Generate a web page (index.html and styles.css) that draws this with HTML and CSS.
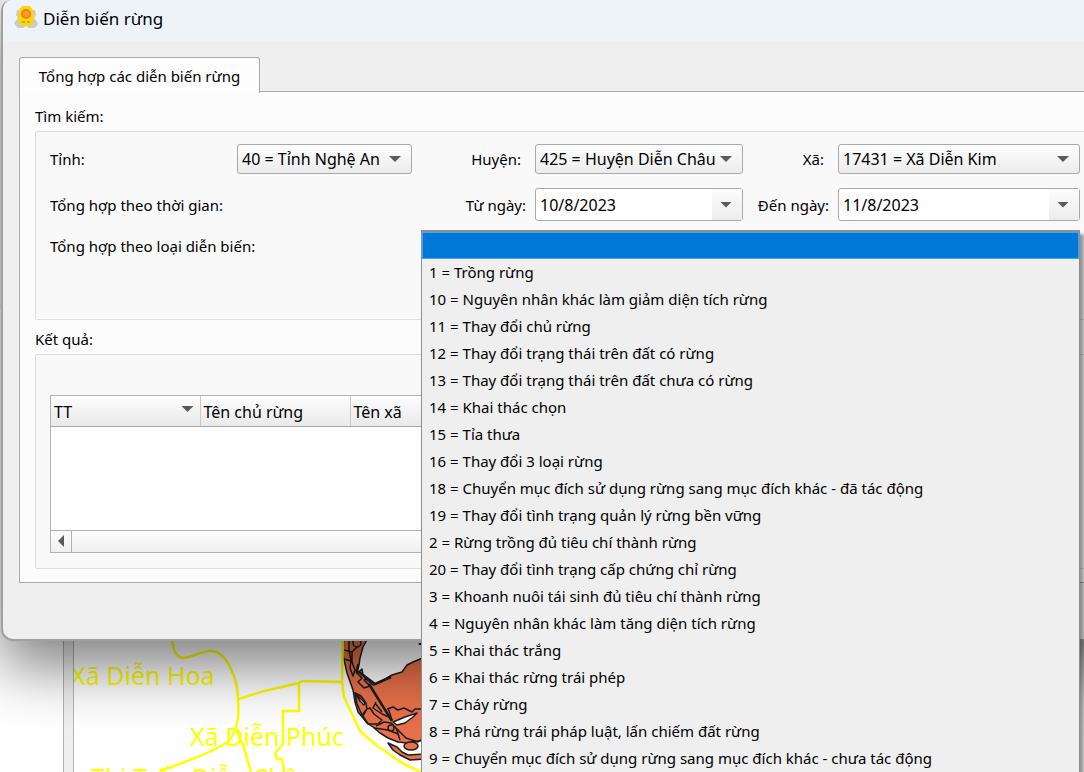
FILE: index.html
```html
<!DOCTYPE html>
<html lang="vi">
<head>
<meta charset="utf-8">
<title>Diễn biến rừng</title>
<link rel="stylesheet" href="styles.css">
</head>
<body>
<main class="desktop">
  <div class="side"></div>
  <div class="splitter"></div>
  <div class="map">
    <svg class="map-art" width="360" height="134" viewBox="73 638 360 134" aria-hidden="true">
      <g fill="#e8704a" stroke="#1c1c1c" stroke-width="1.5" stroke-linejoin="round">
        <path d="M344 632L343 655L347 673L353 690L355 702L358 712L363 718L367 723L373 727L380 733L388 738L398 742L407 743L425 740V657L413 662L407 665L402 672L392 675L380 682L373 685L367 680L363 675L362 669L357 673L359 665L360 658L363 647L368 638V632Z"/>
        <path d="M388 743L397 747L402 752L408 755L425 754V759L410 760L400 755L393 750Z"/>
        <ellipse cx="411" cy="746" rx="7" ry="4"/>
        <g fill="none">
          <path d="M349 636V651L351 660L350 668L353 676L355 670L352 662V652M353 643A4 4 0 1 0 361 643A4 4 0 1 0 353 643M344 650L352 652L358 646M353 636V642M344 659L351 661"/>
          <path d="M358 664L356 672L362 678L358 682L364 688L370 686L364 680L368 678"/>
          <path d="M355 693L357 704L362 715L367 709L366 703L361 696ZM367 709L363 716L368 724L378 724L382 720L374 714L370 708Z"/>
          <path d="M376 702L373 708L382 714L391 718M375 703L382 712M374 728L388 730L398 734L400 740M376 726L384 722L391 723L396 728L399 736M387 709L393 707L398 710L404 708L412 712L415 709L422 709M388 708L392 720M396 728L406 738L418 742L422 739"/>
          <circle cx="391" cy="728" r="3"/>
        </g>
        <path d="M393 722L405 717L417 713L413 717L405 723L397 725Z" fill="#fff"/>
        <path d="M355 693L365 703L364 705L360 701Z" fill="#fff"/>
        <path d="M359 672L375 684L391 677M369 684L392 721M420 643V645" fill="none" stroke-width="2.5"/>
      </g>
      <g fill="none" stroke="#ffff00" stroke-width="2.5" stroke-linejoin="round">
        <path d="M172 636C172 650 177 657 182 658C192 658 201 650 212 651C228 653 238 680 238 700C239 715 239 728 228 742C212 752 186 762 160 771M239 699L264 691L299 683L302 681L342 682M299 683V711H283V744L275 753L277 759H282L284 772M236 729L244 748L251 772M343 636L342 682L344 697L360 731L376 745L402 763L425 774"/>
      </g>
    </svg>
    <span class="place place-hoa">Xã Diễn Hoa</span>
    <span class="place place-phuc">Xã Diễn Phúc</span>
    <span class="place place-chau">Thị Trấn Diễn Châu</span>
  </div>

  <section class="dialog">
    <header class="titlebar">
      <svg width="24" height="24" viewBox="0 0 24 24" aria-hidden="true">
        <path d="M3 4L2 9L4 12L0 17L2 20L4 22H9L12 20L15 22H20L23 20L24 17L20 12L22 9L21 4Z" fill="#cbcbce"/>
        <path d="M8 0H16L19 4L20 12L19 17L16 20H8L5 17L4 12L5 4Z" fill="#fcd705"/>
        <circle cx="12" cy="8" r="4" fill="#f9a21f" stroke="#f27a2a" stroke-width="2"/>
        <path d="M8 16H11M13 16H16" stroke="#9dc51a" stroke-width="2"/>
      </svg>
      <h1>Diễn biến rừng</h1>
    </header>
    <div class="content">
      <button class="tab" type="button">Tổng hợp các diễn biến rừng</button>
      <div class="panel">
        <h2>Tìm kiếm:</h2>
        <form class="group form">
          <label for="tinh">Tỉnh:</label>
          <div class="combo"><select id="tinh"><option>40 = Tỉnh Nghệ An</option></select></div>
          <label class="end inset" for="huyen">Huyện:</label>
          <div class="combo"><select id="huyen"><option>425 = Huyện Diễn Châu</option></select></div>
          <label class="end inset" for="xa">Xã:</label>
          <div class="combo"><select id="xa"><option>17431 = Xã Diễn Kim</option></select></div>

          <span class="wide">Tổng hợp theo thời gian:</span>
          <label class="end" for="tu">Từ ngày:</label>
          <div class="date"><input id="tu" type="text" value="10/8/2023"><button type="button" aria-label="Chọn từ ngày"></button></div>
          <label class="end" for="den">Đến ngày:</label>
          <div class="date"><input id="den" type="text" value="11/8/2023"><button type="button" aria-label="Chọn đến ngày"></button></div>

          <div class="kind">
            <span id="kind-label">Tổng hợp theo loại diễn biến:</span>
            <ul class="popup" role="listbox" aria-labelledby="kind-label">
              <li class="selected" role="option" aria-selected="true"></li>
              <li role="option">1 = Trồng rừng</li>
              <li role="option">10 = Nguyên nhân khác làm giảm diện tích rừng</li>
              <li role="option">11 = Thay đổi chủ rừng</li>
              <li role="option">12 = Thay đổi trạng thái trên đất có rừng</li>
              <li role="option">13 = Thay đổi trạng thái trên đất chưa có rừng</li>
              <li role="option">14 = Khai thác chọn</li>
              <li role="option">15 = Tỉa thưa</li>
              <li role="option">16 = Thay đổi 3 loại rừng</li>
              <li role="option">18 = Chuyển mục đích sử dụng rừng sang mục đích khác - đã tác động</li>
              <li role="option">19 = Thay đổi tình trạng quản lý rừng bền vững</li>
              <li role="option">2 = Rừng trồng đủ tiêu chí thành rừng</li>
              <li role="option">20 = Thay đổi tình trạng cấp chứng chỉ rừng</li>
              <li role="option">3 = Khoanh nuôi tái sinh đủ tiêu chí thành rừng</li>
              <li role="option">4 = Nguyên nhân khác làm tăng diện tích rừng</li>
              <li role="option">5 = Khai thác trắng</li>
              <li role="option">6 = Khai thác rừng trái phép</li>
              <li role="option">7 = Cháy rừng</li>
              <li role="option">8 = Phá rừng trái pháp luật, lấn chiếm đất rừng</li>
              <li role="option">9 = Chuyển mục đích sử dụng rừng sang mục đích khác - chưa tác động</li>
            </ul>
          </div>
        </form>
        <h2>Kết quả:</h2>
        <div class="group result">
          <div class="grid-view">
            <table>
              <thead><tr><th class="sorted">TT</th><th>Tên chủ rừng</th><th>Tên xã</th></tr></thead>
            </table>
            <div class="rows"></div>
            <div class="scrollbar"><button type="button" aria-label="Cuộn trái"></button></div>
          </div>
        </div>
      </div>
    </div>
  </section>
</main>
</body>
</html>
```
FILE: styles.css
```css
* { box-sizing: border-box; }
body { margin: 0; font-family: "Noto Sans", "Open Sans", sans-serif; font-size: 15px; line-height: 22px; color: #000; }
h1, h2 { margin: 0; font-weight: 400; }
button, input, select { font: inherit; color: inherit; margin: 0; }

.desktop { position: relative; display: flex; height: 100vh; overflow: hidden; background: #fff; }
.side { width: 63px; background: linear-gradient(#efefef, #efefef) no-repeat 0 0 / 100% 310px; }
.splitter { width: 11px; background: #efefef; border: 1px solid #b4b4b4; border-width: 0 1px; }
.map { position: relative; flex: 1; overflow: hidden; }
.map-art { position: absolute; left: -1px; top: 638px; }
.place { position: absolute; font-size: 25px; line-height: 32px; color: #ffff00; white-space: nowrap; }
.place-hoa { left: -3px; top: 659px; }
.place-phuc { left: 116px; top: 720px; }
.place-chau { left: 17px; top: 761px; }

.dialog { position: absolute; left: 1px; right: -46px; top: 0; background: #efefef; border: 1px solid #a0a0a0; border-width: 0 1px 2px 2px; border-radius: 10px 10px 12px 12px; box-shadow: 0 26px 60px rgba(0, 0, 0, 0.5); }
.titlebar { display: flex; align-items: center; gap: 5px; height: 41px; padding: 0 11px 5px; background: #eef3fa; border-radius: 10px 10px 0 0; }
.titlebar h1 { padding-top: 2px; font-size: 17px; line-height: 26px; }

.content { padding: 16px 16px 56px; }
.tab { position: relative; display: block; height: 36px; min-width: 241px; margin-bottom: -2px; padding: 0 16px; background: #fdfdfd; border: 1px solid #a9a9a9; border-bottom: 0; border-radius: 3px 3px 0 0; white-space: nowrap; }
.panel { padding: 13px 15px; background: #fcfcfc; border: 1px solid #a9a9a9; }
.panel h2 { font-size: 15px; line-height: 22px; }
.group { margin: 4px 0 8px; background: #f9f9f9; border: 1px solid #dedede; border-radius: 2px; }
.form { display: grid; grid-template-columns: 187px 175fr 123px 208fr 95px 242fr; grid-template-rows: 30px 33px 22px; row-gap: 14px; align-items: center; min-height: 189px; padding: 12px 16px 0 14px; }
.end { padding-right: 9px; text-align: right; }
.inset { padding-right: 14px; }
.wide { grid-column: span 2; }

.combo, .date { position: relative; min-width: 0; font-size: 16px; background: #fff; border: 1px solid #a9a9a9; border-radius: 3px; }
.combo { height: 30px; background: linear-gradient(#fdfdfd, #ececec); }
.combo::after, .date button::after, .sorted::after { content: ""; width: 12px; height: 6px; background: #5a5a5a; clip-path: polygon(0 0, 100% 0, 50% 100%); }
.combo::after { position: absolute; right: 10px; top: 11px; pointer-events: none; }
.combo select { width: 100%; height: 28px; padding: 0 0 0 4px; appearance: none; background: transparent; border: 0; }
.date { display: flex; height: 33px; }
.date input { flex: 1; min-width: 0; padding: 0 0 0 4px; background: transparent; border: 0; }
.date button { display: grid; place-items: center; width: 30px; padding: 0 2px 0 0; background: linear-gradient(#fdfdfd, #ececec); border: 0; }

.kind { position: relative; grid-column: 1 / -1; }
.popup { position: absolute; left: 371px; right: 0; top: -5px; margin: 0; padding: 0; list-style: none; background: #efefef; border: 1px solid #8e8e8e; border-top-width: 2px; box-shadow: 4px 4px 3px rgba(0, 0, 0, 0.4); }
.popup li { height: 27px; padding-left: 7px; font-size: 15px; line-height: 27px; white-space: nowrap; }
.popup .selected { background: #0078d7; border: 1px solid #42a5f5; }

.result { margin-bottom: 0; padding: 40px 16px 15px 14px; }
.grid-view { background: #fff; border: 1px solid #b1b1b1; }
table { width: 100%; table-layout: fixed; border-collapse: collapse; }
th { height: 30px; padding: 3px 3px 0; font-size: 16px; font-weight: 400; text-align: left; background: linear-gradient(#fdfdfd, #e9e9e9); border-right: 1px solid #c8c8c8; border-bottom: 1px solid #a9a9a9; }
th:nth-child(1) { width: 149px; }
th:nth-child(2) { width: 150px; }
.sorted { position: relative; }
.sorted::after { position: absolute; right: 6px; top: 10px; }
.rows { height: 103px; }
.scrollbar { display: flex; height: 22px; background: linear-gradient(#fdfdfd, #f0f0f0); border-top: 1px solid #b1b1b1; }
.scrollbar button { display: grid; place-items: center; width: 21px; padding: 0; background: transparent; border: 0; border-right: 1px solid #b1b1b1; }
.scrollbar button::after { content: ""; width: 6px; height: 12px; background: #5a5a5a; clip-path: polygon(100% 0, 100% 100%, 0 50%); }
```
